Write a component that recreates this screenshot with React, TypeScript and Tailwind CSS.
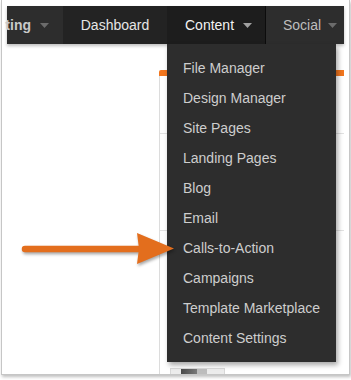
const MENU_ITEMS = [
  "File Manager",
  "Design Manager",
  "Site Pages",
  "Landing Pages",
  "Blog",
  "Email",
  "Calls-to-Action",
  "Campaigns",
  "Template Marketplace",
  "Content Settings",
];

function Caret({ color }: { color: string }) {
  return (
    <svg width="9" height="5" viewBox="0 0 9 5" className="shrink-0">
      <path d="M0 0 L9 0 L4.5 5 Z" fill={color} />
    </svg>
  );
}

function ContentMenu() {
  return (
    <div className="absolute left-0 top-full z-10 w-[169px] h-[318px] bg-[#2d2d2d] py-[9px] shadow-[2px_3px_5px_rgba(0,0,0,0.35)]">
      {MENU_ITEMS.map((item) => (
        <div key={item} className="h-[30px] flex items-center pl-[16px] text-[14px] text-[#cdcdcd] whitespace-nowrap">
          {item}
        </div>
      ))}
    </div>
  );
}

function NavBar() {
  return (
    <div className="flex w-[337px] h-[38px] text-[14px] shadow-[0_2px_3px_rgba(0,0,0,0.25)] relative z-10">
      {/* tab cut off by the screenshot edge */}
      <div className="w-[56px] shrink-0 flex items-center justify-end pr-[14px] bg-[#2d2d2d]">
        <span className="whitespace-nowrap text-[#c9c9c9] font-bold">ting</span>
        <span className="ml-[9px] flex">
          <Caret color="#6b6b6b" />
        </span>
      </div>
      <div className="w-[104px] shrink-0 flex items-center justify-center bg-[#232323] text-[#e6e6e6]">
        Dashboard
      </div>
      <div className="relative w-[98px] shrink-0 flex items-center pl-[18px] bg-[#1d1d1d] text-[#f2f2f2]">
        <span>Content</span>
        <span className="ml-[9px] flex">
          <Caret color="#a0a0a0" />
        </span>
        <ContentMenu />
      </div>
      <div className="w-px shrink-0 bg-[#0c0c0c]" />
      <div className="flex-1 flex items-center pl-[17px] overflow-hidden bg-[#2d2d2d] text-[#bdbdbd]">
        <span>Social</span>
        <span className="ml-[7px] flex">
          <Caret color="#6b6b6b" />
        </span>
      </div>
    </div>
  );
}

function BackgroundPanel() {
  return (
    <div className="ml-[157px] mt-[26px] w-[185px] h-[310px] rounded-tl-[2px] border-t-[6px] border-[#f2761e]">
      <div className="h-full border-l border-[#dcdcdc] flex flex-col">
        <div className="h-[58px] border-b border-[#e2e2e2]" />
        <div className="h-[97px] border-b border-[#e2e2e2]" />
        <div className="flex-1 flex flex-col justify-end pl-[10px]">
          <div className="w-[55px] h-[12px] border border-b-0 border-[#d8d8d8] bg-[#ececec] flex pl-[10px]">
            <div className="w-[16px] h-full bg-gradient-to-r from-[#4a4a4a] to-[#7a7a7a]" />
            <div className="w-[10px] h-full bg-[#bdbdbd]" />
          </div>
        </div>
      </div>
    </div>
  );
}

function Arrow() {
  return (
    <svg
      width="351"
      height="380"
      viewBox="0 0 351 380"
      className="absolute left-0 top-0 z-20 pointer-events-none drop-shadow-[1px_2px_1.5px_rgba(0,0,0,0.35)]"
    >
      <line x1="25" y1="249" x2="142" y2="249" stroke="#e36e1d" strokeWidth="6.5" strokeLinecap="round" />
      <path d="M137 233 L174 248.5 L137 264 L139 248.5 Z" fill="#e36e1d" />
    </svg>
  );
}

export default function App() {
  return (
    <div className="relative w-[351px] h-[380px] overflow-hidden bg-white font-['Liberation_Sans',Arial,sans-serif]">
      <div className="ml-px w-[349px] h-[375px] border-l border-r border-b border-[#c6c6c6] shadow-[1px_2px_3px_rgba(0,0,0,0.25)] overflow-hidden">
        <div className="pt-[6px] pl-[5px]">
          <NavBar />
        </div>
        <BackgroundPanel />
      </div>
      <Arrow />
    </div>
  );
}
